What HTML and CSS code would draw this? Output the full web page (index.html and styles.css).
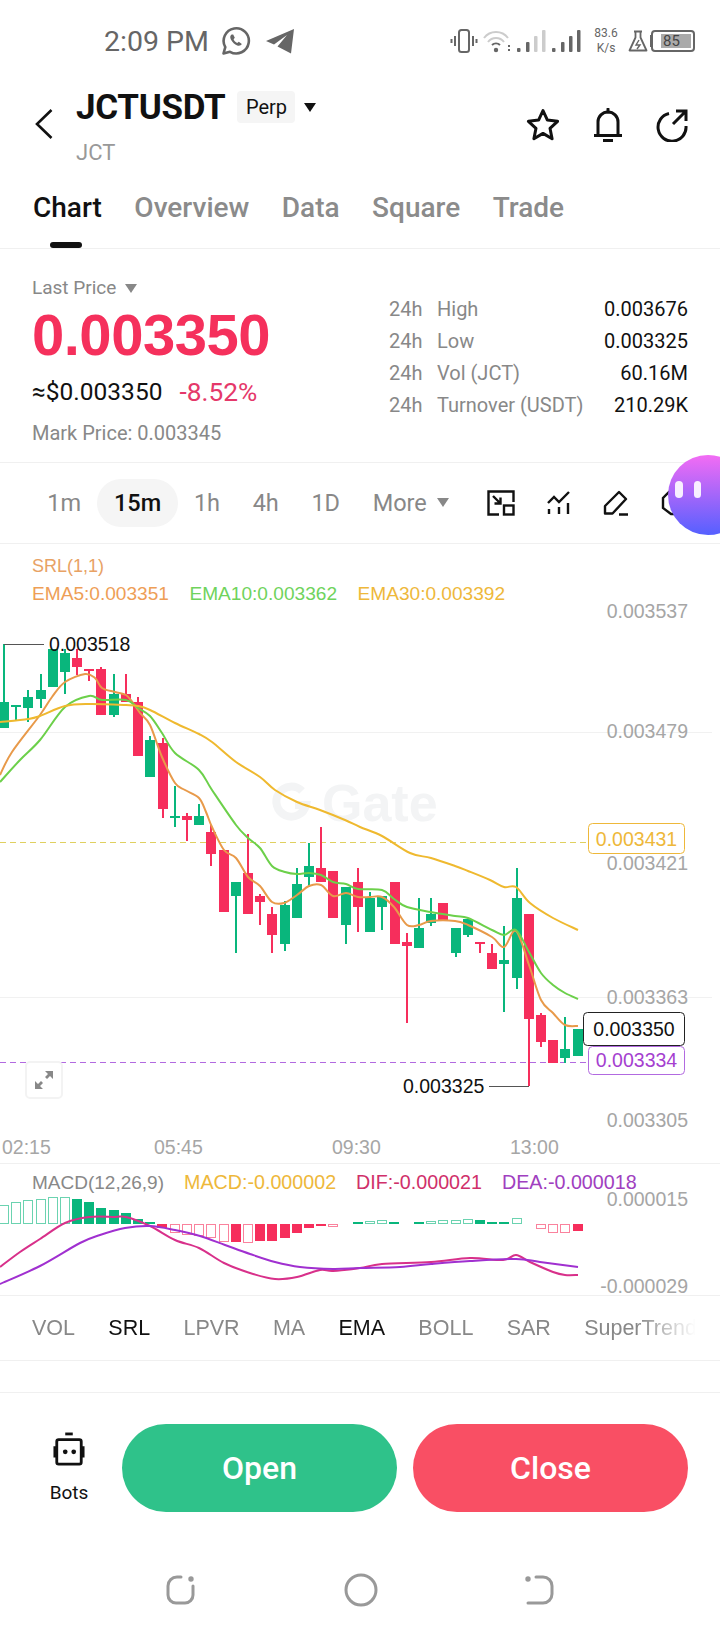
FILE: index.html
```html
<!DOCTYPE html>
<html lang="en">
<head>
    <meta charset="UTF-8">
    <meta name="viewport" content="width=device-width, initial-scale=1.0">
    <title>JCTUSDT Perp</title>
    <link rel="stylesheet" href="styles.css">
</head>
<body>
    <!-- Status bar -->
    <div class="status-bar">
        <div class="status-left">
            <span class="status-time">2:09 PM</span>
            <svg class="ic-whatsapp" width="30" height="30" viewBox="0 0 30 30" fill="none" stroke="#666" stroke-width="2.6">
                <path d="M2.5 27.5l1.8-6.4A12.6 12.6 0 1 1 9 25.8z" stroke-linejoin="round"/>
                <path d="M10.6 8.6c-1.6 1-1.8 3 -.6 5.2 1.4 2.6 3.6 4.6 6.2 5.6 2 .7 3.8 .2 4.6-1.4l-3-2.2-1.6 1.2c-1.6-.8-3-2.2-3.6-3.8l1.2-1.4-1.6-3.2z" fill="#666" stroke="none"/>
            </svg>
            <svg class="ic-telegram" width="30" height="26" viewBox="0 0 30 26">
                <path d="M29 1L1 13l8 3.4L22 7 12.5 18.5 26 25.5z" fill="#666"/>
            </svg>
        </div>
        <div class="status-right">
            <svg width="28" height="24" viewBox="0 0 28 24" fill="none" stroke="#666">
                <rect x="9" y="1" width="10" height="22" rx="2.5" stroke-width="2"/>
                <path d="M5 7v10M1.5 10v4M23 7v10M26.5 10v4" stroke-width="2"/>
            </svg>
            <svg width="29" height="24" viewBox="0 0 29 24" fill="none">
                <path d="M1 9a15 15 0 0 1 24 0M5 13a10 10 0 0 1 16 0" stroke="#ccc" stroke-width="2"/>
                <path d="M9 16a6 6 0 0 1 8 0" stroke="#666" stroke-width="2"/>
                <circle cx="13" cy="21" r="2.2" fill="#666"/>
                <path d="M26 16v2M26 20v2" stroke="#666" stroke-width="2"/>
            </svg>
            <svg class="ic-signal" width="30" height="22" viewBox="0 0 30 22">
                <rect x="0" y="18" width="3.5" height="4" rx="1" fill="#666"/>
                <rect x="9" y="12" width="3.5" height="10" rx="1" fill="#666"/>
                <rect x="17" y="6" width="3.5" height="16" rx="1" fill="#ccc"/>
                <rect x="25" y="0" width="3.5" height="22" rx="1" fill="#ccc"/>
            </svg>
            <svg class="ic-signal" width="30" height="22" viewBox="0 0 30 22">
                <rect x="0" y="18" width="3.5" height="4" rx="1" fill="#666"/>
                <rect x="9" y="12" width="3.5" height="10" rx="1" fill="#666"/>
                <rect x="17" y="6" width="3.5" height="16" rx="1" fill="#666"/>
                <rect x="25" y="0" width="3.5" height="22" rx="1" fill="#666"/>
            </svg>
            <div class="status-speed">83.6<br>K/s</div>
            <svg class="ic-flask" width="20" height="22" viewBox="0 0 20 22" fill="none" stroke="#666" stroke-width="1.8">
                <path d="M6 1.5h8M7.5 1.5v6L1.5 20.5h17L12.5 7.5v-6" stroke-linejoin="round"/>
                <path d="M11 10l-3 5h4l-3 4" stroke-width="1.4"/>
            </svg>
            <div class="battery-nub"></div>
            <div class="battery">
                <div class="battery-fill">85</div>
            </div>
        </div>
    </div>

    <!-- Header -->
    <header class="top-header">
        <svg class="ic-back" width="18" height="30" viewBox="0 0 18 30" fill="none" stroke="#111" stroke-width="2.6">
            <path d="M16.5 1L2 15l14.5 14"/>
        </svg>
        <div class="pair">
            <div class="pair-line">
                <h1 class="pair-name">JCTUSDT</h1>
                <span class="pair-badge">Perp</span>
                <span class="tri tri-dark"></span>
            </div>
            <div class="pair-base">JCT</div>
        </div>
        <div class="header-actions">
            <svg width="34" height="34" viewBox="0 0 34 34" fill="none" stroke="#111" stroke-width="3" stroke-linejoin="round">
                <path d="M17 2.5l4.4 9.6 10.2 1.2-7.6 7 2.1 10.4-9.1-5.3-9.1 5.3 2.1-10.4-7.6-7 10.2-1.2z"/>
            </svg>
            <svg width="30" height="34" viewBox="0 0 30 34" fill="none" stroke="#111" stroke-width="3">
                <path d="M5 27V14a10 10 0 0 1 20 0v13M1 27.5h28M10 32.5h10"/>
                <path d="M15 1v3" stroke-linecap="round"/>
            </svg>
            <svg width="32" height="34" viewBox="0 0 32 34" fill="none" stroke="#111" stroke-width="3">
                <path d="M13 5.5A14 14 0 1 0 30 18"/>
                <path d="M17 16L29 4M20 3h10v10"/>
            </svg>
        </div>
    </header>

    <!-- Tabs -->
    <nav class="main-tabs">
        <a class="main-tab active">Chart</a>
        <a class="main-tab">Overview</a>
        <a class="main-tab">Data</a>
        <a class="main-tab">Square</a>
        <a class="main-tab">Trade</a>
    </nav>

    <!-- Price block -->
    <section class="price-block">
        <div class="price-left">
            <div class="last-label">Last Price <span class="tri tri-gray"></span></div>
            <div class="last-price">0.003350</div>
            <div class="price-sub">
                <span class="price-usd">≈$0.003350</span>
                <span class="price-change">-8.52%</span>
            </div>
            <div class="mark-price">Mark Price: 0.003345</div>
        </div>
        <div class="stats">
            <div class="stat-row"><span class="stat-h">24h</span><span class="stat-name">High</span><span class="stat-val">0.003676</span></div>
            <div class="stat-row"><span class="stat-h">24h</span><span class="stat-name">Low</span><span class="stat-val">0.003325</span></div>
            <div class="stat-row"><span class="stat-h">24h</span><span class="stat-name">Vol (JCT)</span><span class="stat-val">60.16M</span></div>
            <div class="stat-row"><span class="stat-h">24h</span><span class="stat-name">Turnover (USDT)</span><span class="stat-val">210.29K</span></div>
        </div>
    </section>

    <!-- Timeframes -->
    <div class="timeframes">
        <span class="tf">1m</span>
        <span class="tf tf-active">15m</span>
        <span class="tf">1h</span>
        <span class="tf">4h</span>
        <span class="tf">1D</span>
        <span class="tf tf-more">More <span class="tri tri-gray"></span></span>
        <div class="tf-tools">
            <svg width="28" height="26" viewBox="0 0 28 26" fill="none" stroke="#111" stroke-width="2.4">
                <path d="M12 24.5H1.5v-23h25V12"/>
                <rect x="17" y="15.5" width="9.5" height="9"/>
                <path d="M6 6l7 7M13.5 7.5v6h-6"/>
            </svg>
            <svg width="24" height="24" viewBox="0 0 24 24" fill="none" stroke="#111" stroke-width="2.4">
                <path d="M1 12l6-6 5 5 10-10"/>
                <path d="M2 18v5M12 16v7M21 12v11"/>
            </svg>
            <svg width="26" height="26" viewBox="0 0 26 26" fill="none" stroke="#111" stroke-width="2.4" stroke-linejoin="round">
                <path d="M16 2l7 7-13.5 14.5H2V16zM16 24.5h9"/>
            </svg>
            <svg class="tool-cut" width="22" height="26" viewBox="0 0 22 26" fill="none" stroke="#111" stroke-width="2.4">
                <path d="M2 8v10l8 6h10V2H8z"/>
            </svg>
        </div>
    </div>

    <!-- Main chart -->
    <section class="chart">
        <div class="legend">
            <div class="legend-row legend-srl"><span class="c-srl">SRL(1,1)</span></div>
            <div class="legend-row">
                <span class="c-ema5">EMA5:0.003351</span>
                <span class="c-ema10">EMA10:0.003362</span>
                <span class="c-ema30">EMA30:0.003392</span>
            </div>
        </div>
        <svg class="chart-svg" id="mainChart" viewBox="0 544 720 620" width="720" height="620">
            <g class="watermark">
                <path d="M302 791a15 15 0 1 0 4 14h-11" fill="none" stroke="#f3f4f5" stroke-width="8"/>
                <text x="322" y="821">Gate</text>
            </g>
            <path class="grid" d="M0 732.5H712M0 997.5H712"/>
            <path class="dash-orange" d="M0 842.5H588"/>
            <path class="dash-purple" d="M0 1062.5H588"/>
            <g id="candles"></g>
            <g id="emaLines"></g>
            <path class="leader" d="M4 644.5H44M489 1086.5H529"/>
            <text class="ext-label" x="49" y="651">0.003518</text>
            <text class="ext-label" x="403" y="1093">0.003325</text>
            <g class="axis">
                <text x="688" y="618">0.003537</text>
                <text x="688" y="738">0.003479</text>
                <text x="688" y="870">0.003421</text>
                <text x="688" y="1004">0.003363</text>
                <text x="688" y="1127">0.003305</text>
            </g>
            <rect class="tag-orange" x="588.5" y="823.5" width="96" height="30" rx="4"/>
            <text class="tag-text t-orange" x="636.5" y="845.5">0.003431</text>
            <rect class="tag-purple" x="588.5" y="1046.5" width="96" height="28" rx="4"/>
            <text class="tag-text t-purple" x="636.5" y="1067">0.003334</text>
            <rect class="tag-black" x="583.5" y="1012.5" width="101" height="33" rx="4"/>
            <text class="tag-text t-black" x="634" y="1036">0.003350</text>
            <g class="times">
                <text x="2" y="1154">02:15</text>
                <text x="154" y="1154">05:45</text>
                <text x="332" y="1154">09:30</text>
                <text x="510" y="1154">13:00</text>
            </g>
        </svg>
        <div class="expand-btn">
            <svg width="20" height="20" viewBox="0 0 20 20" fill="#888">
                <path d="M11 1h8v8l-3-3-3 3-2-2 3-3zM1 11v8h8l-3-3 3-3-2-2-3 3z"/>
            </svg>
        </div>
    </section>

    <!-- MACD -->
    <section class="macd">
        <div class="macd-legend">
            <span class="c-gray">MACD(12,26,9)</span>
            <span class="c-ema30">MACD:-0.000002</span>
            <span class="c-dif">DIF:-0.000021</span>
            <span class="c-dea">DEA:-0.000018</span>
        </div>
        <svg class="chart-svg" id="macdChart" viewBox="0 1164 720 136" width="720" height="136">
            <g id="macdBars"></g>
            <g id="macdLines"></g>
            <g class="axis">
                <text x="688" y="1206">0.000015</text>
                <text x="688" y="1293">-0.000029</text>
            </g>
        </svg>
    </section>

    <!-- Indicators -->
    <div class="indicators">
        <div class="indicator-list">
            <span>VOL</span>
            <span class="on">SRL</span>
            <span>LPVR</span>
            <span>MA</span>
            <span class="on">EMA</span>
            <span>BOLL</span>
            <span>SAR</span>
            <span>SuperTrend</span>
        </div>
    </div>
    <div class="spacer"></div>

    <!-- Actions -->
    <div class="actions">
        <div class="bots">
            <svg width="32" height="34" viewBox="0 0 34 36" fill="none">
                <path d="M13 2h8" stroke="#111" stroke-width="3"/>
                <rect x="4" y="8" width="26" height="26" rx="2" stroke="#111" stroke-width="3"/>
                <path d="M2 15v12M32 15v12" stroke="#111" stroke-width="3"/>
                <circle cx="13" cy="21" r="2.5" fill="#111"/>
                <circle cx="22" cy="21" r="2.5" fill="#111"/>
            </svg>
            <span>Bots</span>
        </div>
        <button class="trade-btn btn-open">Open</button>
        <button class="trade-btn btn-close">Close</button>
    </div>

    <!-- Android nav -->
    <div class="nav-bar">
        <svg width="32" height="32" viewBox="0 0 32 32" fill="none" stroke="#999" stroke-width="3" stroke-linecap="round">
            <path d="M16 3H12A9 9 0 0 0 3 12v9a8 8 0 0 0 8 8h9a8 8 0 0 0 8-8v-9"/>
            <circle cx="26" cy="5" r="1.2" fill="#999"/>
        </svg>
        <svg width="34" height="34" viewBox="0 0 34 34" fill="none" stroke="#999" stroke-width="3">
            <circle cx="17" cy="17" r="15"/>
        </svg>
        <svg width="30" height="32" viewBox="0 0 30 32" fill="none" stroke="#999" stroke-width="3" stroke-linecap="round">
            <path d="M11 3h7a9 9 0 0 1 9 9v8a9 9 0 0 1-9 9H3"/>
            <circle cx="3" cy="5" r="1.2" fill="#999"/>
        </svg>
    </div>

    <!-- Floating assistant -->
    <div class="assistant">
        <span class="eye"></span>
        <span class="eye"></span>
    </div>

    <script src="chart.js"></script>
</body>
</html>
```

FILE: styles.css
```css
* {
    box-sizing: border-box;
}

html, body {
    margin: 0;
    padding: 0;
}

body {
    width: 720px;
    height: 1640px;
    overflow: hidden;
    position: relative;
    background-color: #fff;
    color: #111;
    font-family: Roboto, "Liberation Sans", sans-serif;
}

svg {
    display: block;
    flex-shrink: 0;
}

/* Small dropdown triangles */
.tri {
    display: inline-block;
    width: 0;
    height: 0;
    border-left: 6.5px solid transparent;
    border-right: 6.5px solid transparent;
}

.tri-dark {
    border-top: 9px solid #111;
}

.tri-gray {
    border-top: 9px solid #888;
    vertical-align: middle;
}

/* Status bar */
.status-bar {
    height: 76px;
    padding: 6px 25px 0 104px;
    display: flex;
    justify-content: space-between;
    align-items: center;
}

.status-left {
    display: flex;
    align-items: center;
}

.status-time {
    font-size: 28.5px;
    color: #666;
    margin-right: 12px;
}

.ic-telegram {
    margin-left: 14px;
}

.status-right {
    display: flex;
    align-items: center;
    gap: 5px;
}

.status-speed {
    width: 32px;
    margin: 0 1px 0 3px;
    font-size: 12px;
    line-height: 15px;
    color: #666;
    text-align: center;
}

.ic-flask {
    margin-right: -3px;
}

.battery-nub {
    width: 3px;
    height: 12px;
    background-color: #666;
    margin-right: -7px;
}

.battery {
    width: 44px;
    height: 22px;
    border: 2px solid #666;
    border-radius: 4px;
    padding: 2px 2px 2px 8px;
}

.battery-fill {
    height: 100%;
    background-color: #aaa;
    color: #444;
    font-size: 15px;
    line-height: 14px;
    padding-left: 2px;
}

/* Header */
.top-header {
    height: 100px;
    padding-left: 35px;
    padding-right: 32px;
    display: flex;
    align-items: flex-start;
}

.ic-back {
    margin-top: 33px;
}

.pair {
    margin-left: 23px;
}

.pair-line {
    display: flex;
    align-items: center;
    height: 50px;
    margin-top: 6px;
}

.pair-name {
    margin: 0;
    font-size: 35px;
    font-weight: 700;
    letter-spacing: -0.3px;
    color: #111;
}

.pair-badge {
    margin-left: 12px;
    width: 58px;
    height: 32px;
    line-height: 32px;
    text-align: center;
    font-size: 20px;
    border-radius: 4px;
    background-color: #f5f5f5;
}

.pair-line .tri {
    margin-left: 9px;
}

.pair-base {
    margin-top: 8px;
    font-size: 22px;
    color: #999;
}

.header-actions {
    margin-left: auto;
    margin-top: 32px;
    display: flex;
    align-items: center;
    gap: 33px;
}

/* Tabs */
.main-tabs {
    height: 73px;
    padding-left: 33px;
    display: flex;
    gap: 32.5px;
    border-bottom: 1px solid #f0f0f0;
}

.main-tab {
    position: relative;
    height: 64px;
    line-height: 64px;
    font-size: 28px;
    font-weight: 500;
    color: #8b8b8b;
}

.main-tab.active {
    color: #111;
}

.main-tab.active::after {
    content: '';
    position: absolute;
    left: 17px;
    top: 66px;
    width: 32px;
    height: 6px;
    border-radius: 3px;
    background-color: #111;
}

/* Price block */
.price-block {
    height: 214px;
    padding: 26px 32px 0;
    display: flex;
    justify-content: space-between;
    border-bottom: 1px solid #f0f0f0;
}

.last-label {
    font-size: 19px;
    line-height: 26px;
    color: #888;
}

.last-label .tri {
    margin-left: 4px;
}

.last-price {
    margin-top: 1px;
    font-family: "Liberation Sans", sans-serif;
    font-size: 58px;
    font-weight: 700;
    line-height: 66px;
    letter-spacing: -0.5px;
    color: #f5305c;
}

.price-sub {
    margin-top: 8px;
    display: flex;
    gap: 17px;
    font-size: 24.5px;
    line-height: 32px;
}

.price-change {
    font-size: 26.3px;
    color: #e5386a;
}

.mark-price {
    margin-top: 12px;
    font-size: 20px;
    line-height: 26px;
    color: #888;
}

.stats {
    width: 299px;
    padding-top: 18px;
}

.stat-row {
    display: flex;
    height: 32px;
    line-height: 32px;
    font-size: 20px;
    color: #888;
}

.stat-h {
    width: 48px;
}

.stat-val {
    margin-left: auto;
    color: #111;
}

/* Timeframes */
.timeframes {
    height: 81px;
    padding-left: 31px;
    display: flex;
    align-items: center;
    font-size: 23.5px;
    color: #888;
    border-bottom: 1px solid #f0f0f0;
}

.tf {
    padding: 0 16.3px;
    height: 48px;
    line-height: 49px;
    white-space: nowrap;
}

.tf-active {
    padding: 0 16.5px;
    color: #111;
    font-weight: 500;
    background-color: #f5f5f5;
    border-radius: 24px;
}

.tf-more .tri {
    margin-left: 4px;
    margin-top: -4px;
}

.tf-tools {
    margin-left: 22px;
    display: flex;
    align-items: center;
    gap: 32px;
}

/* Main chart */
.chart {
    position: relative;
    height: 620px;
    border-bottom: 1px solid #f0f0f0;
}

.chart-svg {
    position: absolute;
    left: 0;
    top: 0;
}

.legend {
    position: relative;
    z-index: 1;
    padding: 9px 0 0 32px;
    font-family: "Liberation Sans", sans-serif;
    font-size: 19.1px;
}

.legend-row {
    display: flex;
    gap: 20.5px;
    height: 27px;
    line-height: 28px;
}

.legend-srl {
    font-size: 18px;
    line-height: 27px;
}

.c-srl {
    color: #e8a264;
}

.c-ema5 {
    color: #ee9e56;
}

.c-ema10 {
    color: #6fd35c;
}

.c-ema30 {
    color: #eeb83a;
}

.c-gray {
    color: #888;
    font-size: 19px;
}

.c-dif {
    color: #d0306a;
}

.c-dea {
    color: #a040c0;
}

.chart-svg text {
    font-family: "Liberation Sans", sans-serif;
    font-size: 19.5px;
}

.chart-svg .watermark text {
    font-size: 52px;
    font-weight: 700;
    fill: #f3f4f5;
}

.grid {
    stroke: #f1f1f1;
    fill: none;
}

.dash-orange {
    stroke: #e0d060;
    stroke-dasharray: 6 4;
    fill: none;
}

.dash-purple {
    stroke: #b26ae0;
    stroke-dasharray: 6 4;
    fill: none;
}

.leader {
    stroke: #555;
    fill: none;
}

.ext-label {
    fill: #111;
}

.axis text {
    fill: #a6a6a6;
    text-anchor: end;
}

.times text {
    fill: #a6a6a6;
}

.tag-orange, .tag-purple, .tag-black {
    fill: #fff;
}

.tag-orange {
    stroke: #eeb83a;
}

.tag-purple {
    stroke: #b26ae0;
}

.tag-black {
    stroke: #222;
}

.tag-text {
    text-anchor: middle;
}

.t-orange {
    fill: #eeb83a;
}

.t-purple {
    fill: #a53fd0;
}

.t-black {
    fill: #111;
}

.expand-btn {
    position: absolute;
    left: 25px;
    top: 517px;
    width: 38px;
    height: 38px;
    display: flex;
    align-items: center;
    justify-content: center;
    background-color: #fff;
    border: 2px solid #f3f3f3;
    border-radius: 5px;
}

/* MACD */
.macd {
    position: relative;
    height: 132px;
    border-bottom: 1px solid #f0f0f0;
}

.macd-legend {
    position: relative;
    z-index: 1;
    padding-left: 32px;
    display: flex;
    align-items: baseline;
    gap: 20px;
    height: 36px;
    line-height: 36px;
    font-family: "Liberation Sans", sans-serif;
    font-size: 19.7px;
}

/* Indicators */
.indicators {
    height: 65px;
    padding-left: 32px;
    display: flex;
    align-items: center;
    border-bottom: 1px solid #f0f0f0;
}

.indicator-list {
    width: 688px;
    display: flex;
    gap: 33.3px;
    overflow: hidden;
    white-space: nowrap;
    font-family: "Liberation Sans", sans-serif;
    font-size: 21.5px;
    color: #888;
    -webkit-mask-image: linear-gradient(to right, #000 88%, transparent 96.5%);
    mask-image: linear-gradient(to right, #000 88%, transparent 96.5%);
}

.indicator-list .on {
    color: #111;
}

.spacer {
    height: 32px;
    border-bottom: 1px solid #f0f0f0;
}

/* Actions */
.actions {
    height: 152px;
    padding: 31px 32px 0 0;
    display: flex;
    gap: 16px;
}

.bots {
    width: 106px;
    padding-left: 32px;
    display: flex;
    flex-direction: column;
    align-items: center;
    font-size: 19px;
    color: #111;
}

.bots svg {
    margin-top: 8px;
    margin-bottom: 15px;
}

.trade-btn {
    width: 275px;
    height: 88px;
    border: none;
    border-radius: 44px;
    color: #fff;
    font-family: Roboto, sans-serif;
    font-size: 32px;
    font-weight: 500;
}

.btn-open {
    background-color: #2fc28a;
}

.btn-close {
    background-color: #f94f64;
}

/* Android nav */
.nav-bar {
    height: 80px;
    padding: 10px 165px 0 165px;
    display: flex;
    align-items: center;
    justify-content: space-between;
}

/* Floating assistant */
.assistant {
    position: absolute;
    left: 668px;
    top: 455px;
    width: 80px;
    height: 80px;
    padding: 26px 0 0 7px;
    display: flex;
    align-items: flex-start;
    gap: 11px;
    border-radius: 50%;
    background: linear-gradient(to bottom, #f36cf4, #5560ff);
}

.eye {
    width: 7.5px;
    height: 17px;
    border-radius: 4px;
    background-color: #fff;
    opacity: 0.9;
}
```

FILE: chart.js
```js
var NS = 'http://www.w3.org/2000/svg';
var GREEN = '#09b67c';
var RED = '#f62e5c';

// x, haut du corps, bas du corps, haut de la meche, bas de la meche
var candles = [
    ['g', 4, 702, 728, 644, 728], ['g', 16, 705, 707, 705, 720], ['g', 28, 697, 708, 690, 722],
    ['g', 41, 690, 699, 674, 708], ['g', 53, 649, 687, 649, 687], ['g', 65, 653, 672, 649, 694],
    ['r', 77, 658, 667, 649, 675], ['r', 89, 669, 671, 669, 681], ['r', 101, 669, 715, 667, 715],
    ['g', 114, 694, 715, 674, 717], ['r', 126, 694, 702, 674, 702], ['r', 138, 702, 756, 697, 756],
    ['g', 150, 740, 777, 736, 777], ['r', 163, 743, 809, 738, 818], ['g', 175, 816, 818, 786, 827],
    ['r', 187, 816, 820, 813, 841], ['g', 199, 816, 825, 804, 825], ['r', 211, 832, 854, 825, 866],
    ['r', 224, 850, 912, 850, 912], ['g', 236, 882, 896, 882, 953], ['r', 248, 873, 914, 834, 914],
    ['r', 260, 896, 902, 894, 925], ['r', 272, 914, 935, 907, 953], ['g', 285, 905, 944, 901, 951],
    ['g', 297, 884, 918, 868, 918], ['g', 309, 866, 877, 843, 887], ['r', 321, 868, 882, 827, 882],
    ['r', 333, 871, 918, 871, 918], ['g', 346, 887, 925, 887, 944], ['r', 358, 882, 907, 868, 932],
    ['g', 370, 898, 932, 892, 932], ['g', 382, 896, 907, 896, 930], ['r', 395, 882, 944, 882, 944],
    ['r', 407, 942, 946, 933, 1023], ['g', 419, 928, 948, 898, 948], ['g', 431, 914, 923, 898, 926],
    ['r', 443, 903, 921, 903, 921], ['g', 456, 928, 953, 928, 957], ['g', 468, 919, 935, 919, 937],
    ['r', 480, 942, 944, 942, 953], ['r', 492, 953, 969, 944, 969], ['g', 504, 960, 964, 926, 1012],
    ['g', 517, 898, 978, 868, 989], ['r', 529, 914, 1019, 914, 1086], ['r', 541, 1015, 1042, 1013, 1047],
    ['r', 553, 1040, 1063, 1040, 1063], ['g', 565, 1049, 1058, 1017, 1063], ['g', 578, 1029, 1056, 1029, 1056]
];

var emaLines = [
    { color: '#e89a4a', pts: '0,775 12,752 40,715 52,697 65,682 85,674 95,678 102,688 115,692 126,695 133,703 140,713 150,725 162,757 175,783 185,790 199,798 206,812 212,827 224,850 236,858 248,877 260,886 272,902 284,903 297,895 309,886 321,885 333,896 346,893 358,897 370,897 382,897 394,907 407,925 419,925 431,921 455,921 468,925 492,937 504,947 516,931 529,965 541,1000 553,1013 565,1025 578,1026' },
    { color: '#6cd04a', pts: '0,782 20,760 40,740 65,707 89,696 102,700 126,700 138,708 150,716 162,733 175,753 199,770 212,790 236,825 248,838 260,848 272,866 285,872 297,874 309,873 321,875 333,882 346,884 358,889 382,890 394,899 407,907 431,912 455,916 468,918 492,930 504,935 516,930 529,952 541,973 553,985 565,993 578,999' },
    { color: '#efb92f', pts: '0,722 28,719 40,716 65,706 89,704 126,705 138,706 150,710 175,723 199,734 212,742 236,762 260,777 275,790 297,802 320,810 345,820 360,827 382,836 410,853 431,858 455,866 468,871 490,880 504,887 516,887 530,903 553,918 578,930' }
];

// x, haut, bas, plein ou creux
var macdBars = [
    ['g', 4, 1205, 1224, 0], ['g', 16, 1202, 1224, 0], ['g', 28, 1200, 1224, 0], ['g', 41, 1199, 1224, 0],
    ['g', 53, 1197, 1224, 0], ['g', 65, 1197, 1224, 0], ['g', 77, 1199, 1224, 1], ['g', 89, 1202, 1224, 1],
    ['g', 101, 1208, 1224, 1], ['g', 114, 1210, 1224, 1], ['g', 126, 1213, 1224, 1], ['g', 138, 1219, 1224, 1],
    ['g', 150, 1222, 1224, 1], ['r', 162, 1224, 1228, 1], ['r', 175, 1224, 1233, 0], ['r', 187, 1224, 1235, 0],
    ['r', 199, 1224, 1236, 0], ['r', 211, 1224, 1238, 0], ['r', 224, 1224, 1242, 0], ['r', 236, 1224, 1242, 1],
    ['r', 248, 1224, 1243, 0], ['r', 260, 1224, 1241, 1], ['r', 272, 1224, 1241, 1], ['r', 285, 1224, 1238, 1],
    ['r', 297, 1224, 1233, 1], ['r', 309, 1224, 1228, 1], ['r', 321, 1224, 1226, 1], ['r', 333, 1224, 1227, 0],
    ['g', 358, 1222, 1224, 1], ['g', 370, 1221, 1224, 0], ['g', 382, 1220, 1224, 0], ['g', 394, 1222, 1224, 1],
    ['g', 419, 1222, 1224, 1], ['g', 431, 1221, 1224, 0], ['g', 443, 1220, 1224, 0], ['g', 456, 1220, 1224, 0],
    ['g', 468, 1219, 1224, 0], ['g', 480, 1220, 1224, 1], ['g', 492, 1222, 1224, 1], ['g', 504, 1222, 1224, 1],
    ['g', 517, 1218, 1224, 0], ['r', 541, 1224, 1229, 0], ['r', 553, 1224, 1233, 0], ['r', 565, 1224, 1233, 0],
    ['r', 578, 1224, 1231, 1]
];

var macdLines = [
    { color: '#d8308a', pts: '0,1267 20,1252 40,1239 65,1223 89,1217 115,1217 126,1217 150,1226 175,1240 199,1248 224,1263 250,1273 275,1279 297,1277 320,1270 333,1271 360,1268 382,1264 431,1262 470,1258 503,1260 516,1255 530,1262 553,1272 565,1275 578,1275' },
    { color: '#a030d0', pts: '0,1284 40,1266 80,1243 100,1235 125,1228 150,1226 175,1230 200,1236 225,1245 250,1254 275,1262 300,1267 333,1269 360,1268 400,1267 431,1264 470,1261 516,1259 540,1262 578,1267' }
];

function add(parent, tag, attrs) {
    var el = document.createElementNS(NS, tag);
    Object.keys(attrs).forEach(function(name) {
        el.setAttribute(name, attrs[name]);
    });
    parent.appendChild(el);
}

// Courbe lissee qui passe par tous les points
function smoothPath(str) {
    var p = str.split(' ').map(function(s) {
        return s.split(',').map(Number);
    });
    var d = 'M' + p[0][0] + ' ' + p[0][1];
    for (var i = 0; i < p.length - 1; i++) {
        var a = p[i - 1] || p[i];
        var b = p[i];
        var c = p[i + 1];
        var e = p[i + 2] || c;
        d += 'C' + (b[0] + (c[0] - a[0]) / 6) + ' ' + (b[1] + (c[1] - a[1]) / 6) + ' ' +
            (c[0] - (e[0] - b[0]) / 6) + ' ' + (c[1] - (e[1] - b[1]) / 6) + ' ' + c[0] + ' ' + c[1];
    }
    return d;
}

function drawLines(parent, lines) {
    lines.forEach(function(line) {
        add(parent, 'path', {
            d: smoothPath(line.pts),
            fill: 'none',
            stroke: line.color,
            'stroke-width': 2
        });
    });
}

var candleGroup = document.getElementById('candles');
candles.forEach(function(c) {
    var color = c[0] === 'g' ? GREEN : RED;
    add(candleGroup, 'rect', { x: c[1] - 1, y: c[4], width: 2, height: c[5] - c[4], fill: color });
    add(candleGroup, 'rect', { x: c[1] - 5, y: c[2], width: 10, height: c[3] - c[2], fill: color });
});

var barGroup = document.getElementById('macdBars');
macdBars.forEach(function(b) {
    var color = b[0] === 'g' ? GREEN : RED;
    if (b[4] === 1) {
        add(barGroup, 'rect', { x: b[1] - 5, y: b[2], width: 10, height: b[3] - b[2], fill: color });
    } else {
        add(barGroup, 'rect', {
            x: b[1] - 4.5,
            y: b[2] + 0.5,
            width: 9,
            height: b[3] - b[2] - 1,
            fill: 'none',
            stroke: color,
            'stroke-opacity': 0.6
        });
    }
});

drawLines(document.getElementById('emaLines'), emaLines);
drawLines(document.getElementById('macdLines'), macdLines);
```
